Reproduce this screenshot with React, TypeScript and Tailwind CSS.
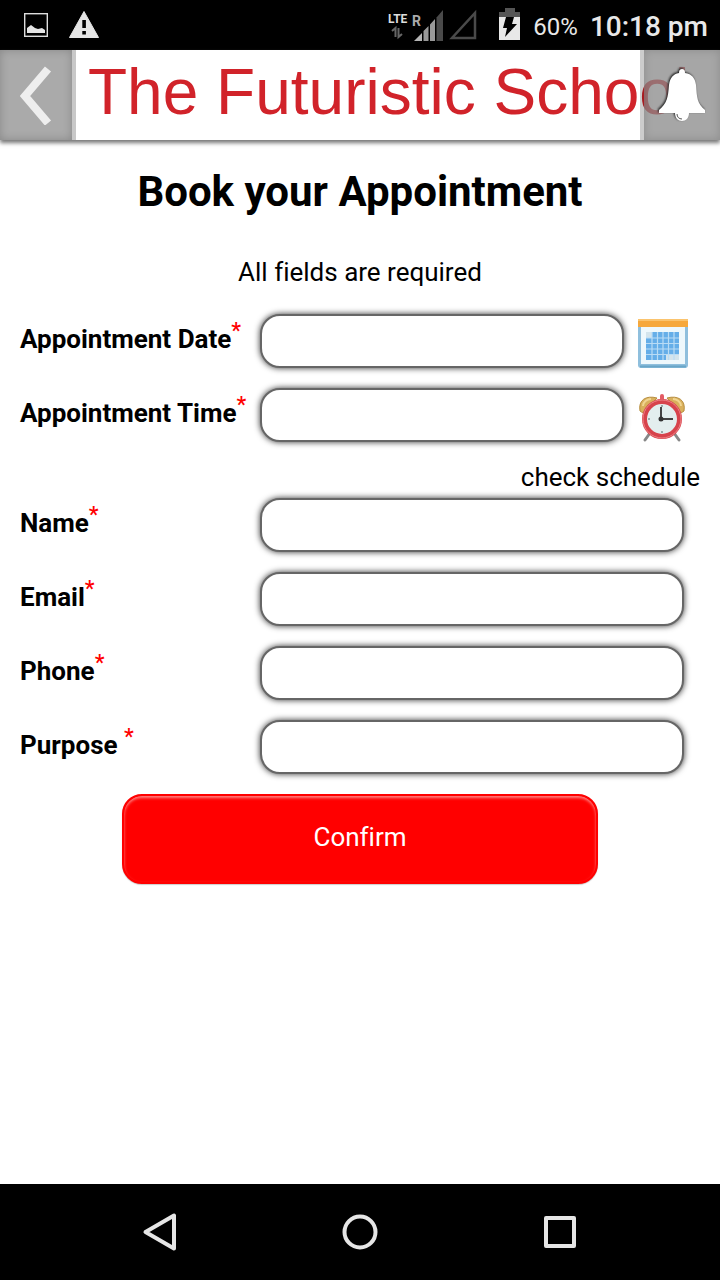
import { InputHTMLAttributes, ReactNode } from "react";

interface FieldProps extends InputHTMLAttributes<HTMLInputElement> {
  id: string;
  label: string;
  action?: ReactNode;
}

function Field({ id, label, action, ...props }: FieldProps) {
  return (
    <div className="flex items-center">
      <label htmlFor={id} className="w-60 shrink-0 whitespace-pre pb-1 text-[26px] leading-8 font-bold">
        {label}
        <sup className="-top-2.5 text-[22px] leading-none font-medium text-[#f00]">*</sup>
      </label>
      <input
        id={id}
        name={id}
        required
        className={`h-[54px] min-w-0 flex-1 rounded-[20px] border-2 border-[#666] bg-white px-4 text-2xl shadow-[0_0_6px_rgba(0,0,0,0.8)] outline-none ${
          action ? "mr-3.5" : "mr-4"
        }`}
        {...props}
      />
      {action}
    </div>
  );
}

function StatusBar() {
  return (
    <div className="flex h-[50px] items-center bg-black pr-3 pl-6 text-[#e8e8e8]">
      <svg width="24" height="50" viewBox="0 0 24 50" aria-hidden="true">
        <rect x="0.7" y="13.7" width="22.6" height="22.6" fill="none" stroke="#ddd" strokeWidth="1.4" />
        <path d="M3 33v-5l4-3 4 3 3 1 4-1 3 2v3z" fill="#e5e5e5" />
      </svg>
      <svg className="ml-[21px]" width="30" height="50" viewBox="0 0 30 50" aria-hidden="true">
        <path d="M15 11.5 29.5 37.5H.5z" fill="#e5e5e5" stroke="#e5e5e5" strokeLinejoin="round" />
        <path d="M13.3 20h3.6v8h-3.6zM13.3 31h3.6v3.4h-3.6z" fill="#000" />
      </svg>
      <svg className="ml-auto shrink-0" width="90" height="50" viewBox="0 0 90 50" aria-hidden="true">
        <text x="0" y="23" fill="#ddd" fontFamily="Roboto, sans-serif" fontSize="12" fontWeight="700">
          LTE
        </text>
        <text x="24" y="26" fill="#aaa" fontFamily="Roboto, sans-serif" fontSize="14" fontWeight="700">
          R
        </text>
        <path d="M4 31l3.5-3v9M10.5 28v9l3.5-3" fill="none" stroke="#666" strokeWidth="2" />
        <path d="M26 41h8v-8z" fill="#b5b5b5" />
        <path d="M35.5 41h5V26l-5 5zM42 41h5V19l-5 5.5z" fill="#999" />
        <path d="M48.500 41H55V10l-6.500 7.500z" fill="#4a4a4a" />
        <path d="M64 38h23V13z" fill="none" stroke="#4a4a4a" strokeWidth="2.500" />
      </svg>
      <svg className="ml-[21px] shrink-0" width="22" height="50" viewBox="0 0 22 50" aria-hidden="true">
        <path d="M6 8h10v4h5v5H0v-5h6z" fill="#555" />
        <path d="M0 17h21v23H0z" fill="#e8e8e8" />
        <path d="M7 17h8l-2 7h5L6 37l2-9H4z" fill="#000" />
      </svg>
      <span className="ml-3 pt-1 text-2xl font-normal">60%</span>
      <span className="ml-3 pt-1 text-[28px] font-medium whitespace-nowrap">10:18 pm</span>
    </div>
  );
}

function Header() {
  return (
    <header className="relative flex h-[90px] bg-white shadow-[0_3px_4px_#777]">
      <button
        type="button"
        aria-label="Back"
        className="flex w-[76px] shrink-0 items-center justify-center border-r-4 border-[#c8c8c8] bg-[#aaa] shadow-[inset_0_0_10px_rgba(0,0,0,0.2)]"
      >
        <svg width="32" height="60" viewBox="0 0 32 60" aria-hidden="true">
          <path d="M28 4 5 31l23 27" fill="none" stroke="#eee" strokeWidth="8" />
        </svg>
      </button>
      <div className="min-w-0 flex-1 pl-3 font-['Liberation_Sans',Arial,sans-serif] text-[64px] leading-[84px] whitespace-nowrap text-[#d1232a]">
        The Futuristic School
      </div>
      <button
        type="button"
        aria-label="Notifications"
        className="relative flex w-20 shrink-0 items-center justify-center border-l-4 border-black/20 bg-[#888]/75 bg-clip-padding shadow-[inset_0_0_10px_rgba(0,0,0,0.15)]"
      >
        <svg className="drop-shadow-[-1px_-1px_1px_#222]" width="48" height="54" viewBox="0 0 48 54" aria-hidden="true">
          <path
            d="M24 1c2 0 3 1 3 4 7 1 10 5 11 12 1 13 1 18 9 25v3H31c0 5-3 8-7 8s-7-3-7-8H1v-3c8-7 9-12 10-25C12 10 15 6 21 5c0-3 1-4 3-4z"
            fill="#fff"
          />
          <path d="M19 46c0 3 2 5 5 5" fill="none" stroke="#555" strokeWidth="1" />
        </svg>
      </button>
    </header>
  );
}

function CalendarIcon() {
  return (
    <svg width="50" height="50" viewBox="0 0 50 50" aria-hidden="true">
      <rect x="0" y="2" width="50" height="48" rx="3" fill="#8fbfdd" />
      <rect x="3" y="8" width="44" height="38" fill="#eef8fc" />
      <path d="M0 1h50v8H0z" fill="#f6a83c" />
      <path d="M0 1h50v2H0z" fill="#fbc46e" />
      <path d="M14 14h27v22H28v6H8V20h6z" fill="#65aee8" />
      <path d="M8 14h6v6H8zM28 36h13v6H28z" fill="#d3e4ec" />
      <path
        d="M8 20h33M8 25.500h33M8 31h33M8 36.500h33M14 14v28M19.500 14v28M25 14v28M30.500 14v28M36 14v28"
        stroke="#b9dcf5"
        strokeWidth="1.200"
      />
      <path d="M2 48.500h46" stroke="#69a6c8" strokeWidth="2" />
    </svg>
  );
}

function ClockIcon() {
  return (
    <svg width="50" height="50" viewBox="0 0 50 50" aria-hidden="true">
      <path d="m12 41-5 7M36 41l5 7" stroke="#888" strokeWidth="3" strokeLinecap="round" />
      <path d="M2 19C0 8 8 3 19 6L5 21zM46 19C48 8 40 3 29 6l14 15z" fill="#d9b05c" stroke="#b78d3d" />
      <path d="M5 14c0-4 4-7 8-7M43 14c0-4-4-7-8-7" fill="none" stroke="#f1d590" strokeWidth="2" />
      <path d="M24 4v4" stroke="#e35b64" strokeWidth="4" strokeLinecap="round" />
      <circle cx="24" cy="27" r="17.500" fill="#e3eeee" stroke="#d7434c" strokeWidth="5" />
      <circle cx="24" cy="27" r="19" fill="none" stroke="#ee8286" strokeWidth="1" />
      <path d="M24 13v2M24 39v2M10 27h2" stroke="#99aaaa" strokeWidth="2" />
      <path d="M23 15v12h12" fill="none" stroke="#444" strokeWidth="2" />
      <circle cx="23" cy="27" r="2.500" fill="#333" />
    </svg>
  );
}

function NavBar() {
  return (
    <nav className="flex h-24 items-center justify-center gap-40 bg-black">
      <button type="button" aria-label="Back">
        <svg width="40" height="40" viewBox="0 0 40 40" fill="none" stroke="#e6e6e6" strokeWidth="4" strokeLinejoin="round">
          <path d="M34 3.500v33L5.500 20z" />
        </svg>
      </button>
      <button type="button" aria-label="Home">
        <svg width="40" height="40" viewBox="0 0 40 40" fill="none" stroke="#e6e6e6" strokeWidth="4">
          <circle cx="20" cy="20" r="15.500" />
        </svg>
      </button>
      <button type="button" aria-label="Recent apps">
        <svg width="40" height="40" viewBox="0 0 40 40" fill="none" stroke="#e6e6e6" strokeWidth="4" strokeLinejoin="round">
          <path d="M6 6h28v28H6z" />
        </svg>
      </button>
    </nav>
  );
}

export default function App() {
  return (
    <div className="flex min-h-screen flex-col bg-white font-[Roboto,sans-serif] text-black [font-variant-ligatures:none]">
      <StatusBar />
      <Header />
      <main className="flex-1 px-5 pt-6">
        <h1 className="text-center text-[42px] leading-[56px] font-bold">Book your Appointment</h1>
        <p className="mt-9 text-center text-[26px] leading-8">All fields are required</p>
        <form className="mt-[26px] flex flex-col gap-5" onSubmit={(e) => e.preventDefault()}>
          <Field
            id="date"
            label="Appointment Date"
            action={
              <button type="button" aria-label="Pick date" className="mr-3 shrink-0 pt-1">
                <CalendarIcon />
              </button>
            }
          />
          <Field
            id="time"
            label="Appointment Time"
            action={
              <button type="button" aria-label="Pick time" className="mr-3 shrink-0 pt-1">
                <ClockIcon />
              </button>
            }
          />
          <a href="#schedule" className="-mb-3.5 self-end text-[26px] leading-[30px]">
            check schedule
          </a>
          <Field id="name" label="Name" />
          <Field id="email" label="Email" type="email" />
          <Field id="phone" label="Phone" type="tel" />
          <Field id="purpose" label="Purpose " />
          <button
            type="submit"
            className="h-[90px] w-[70%] self-center rounded-[20px] border-2 border-[#f00] bg-[#f00] pb-1 text-[26px] text-white shadow-[inset_0_2px_3px_rgba(255,255,255,0.5),0_1px_1px_#ccc]"
          >
            Confirm
          </button>
        </form>
      </main>
      <NavBar />
    </div>
  );
}
